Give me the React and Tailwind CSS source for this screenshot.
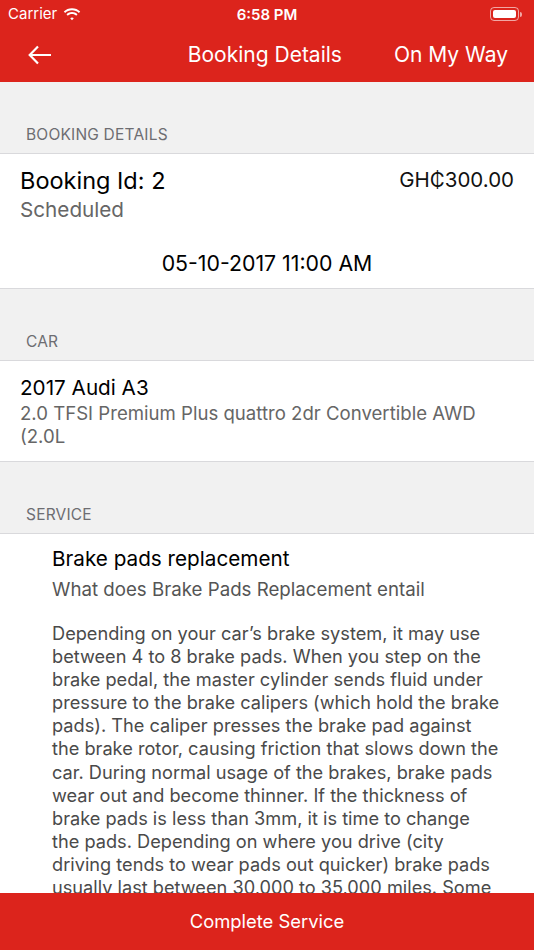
const font = { fontFamily: "Inter, 'Noto Sans', sans-serif" };

const paragraph = [
  "Depending on your car’s brake system, it may use",
  "between 4 to 8 brake pads. When you step on the",
  "brake pedal, the master cylinder sends fluid under",
  "pressure to the brake calipers (which hold the brake",
  "pads). The caliper presses the brake pad against",
  "the brake rotor, causing friction that slows down the",
  "car. During normal usage of the brakes, brake pads",
  "wear out and become thinner. If the thickness of",
  "brake pads is less than 3mm, it is time to change",
  "the pads. Depending on where you drive (city",
  "driving tends to wear pads out quicker) brake pads",
  "usually last between 30,000 to 35,000 miles. Some",
];

const Wifi = () => (
  <svg width="18" height="13" viewBox="0 0 18 13" fill="white">
    <path d="M9 2.2c2.7 0 5.1 1 6.9 2.7l1.3-1.4C15.1 1.4 12.2.2 9 .2S2.9 1.4.8 3.5l1.3 1.4C3.9 3.2 6.3 2.2 9 2.2z" />
    <path d="M9 6c1.6 0 3.1.6 4.2 1.7l1.3-1.4C13.1 4.9 11.1 4 9 4s-4.1.9-5.5 2.3l1.3 1.4C5.9 6.6 7.4 6 9 6z" />
    <path d="M9 9.6c.7 0 1.3.3 1.8.7L9 12.2l-1.8-1.9c.5-.4 1.1-.7 1.8-.7z" />
  </svg>
);

const SectionHeader = ({ title }) => (
  <div className="flex h-[72px] items-end border-b border-[#d9d9dc] bg-[#f1f1f1] px-[26px] pb-[7px]">
    <span className="text-[15.5px] uppercase tracking-[0.2px] text-[#6d6d72]">{title}</span>
  </div>
);

export default function App() {
  return (
    <div style={font} className="relative flex h-[950px] w-[534px] flex-col overflow-hidden bg-[#f1f1f1]">
      <div className="bg-[#dc241c] text-white">
        <div className="flex h-[28px] items-center justify-between px-[8px]">
          <div className="flex items-center gap-[6px] text-[15px]">
            <span>Carrier</span>
            <Wifi />
          </div>
          <span className="absolute left-1/2 top-[4px] -translate-x-1/2 text-[15px] font-semibold">6:58 PM</span>
          <div className="flex items-center gap-[1px] pr-[4px]">
            <div className="flex h-[14px] w-[29px] items-center rounded-[4px] border border-white/60 p-[2px]">
              <div className="h-full w-full rounded-[2px] bg-white" />
            </div>
            <div className="h-[5px] w-[2px] rounded-r-sm bg-white/60" />
          </div>
        </div>
        <div className="flex h-[54px] items-center justify-between pl-[28px] pr-[26px]">
          <svg width="24" height="20" viewBox="0 0 24 20" fill="none" stroke="white" strokeWidth="2.2">
            <path d="M23 10H2M10 1.5L1.7 10l8.3 8.5" />
          </svg>
          <div className="flex items-center gap-[52px] text-[21px]">
            <span>Booking Details</span>
            <span>On My Way</span>
          </div>
        </div>
      </div>

      <div className="flex-1 overflow-hidden">
        <SectionHeader title="Booking Details" />
        <div className="border-b border-[#d9d9dc] bg-white px-[20px] pb-[11px] pt-[12px]">
          <div className="flex items-start justify-between">
            <div>
              <div className="text-[23.5px] leading-[30px] text-black">Booking Id: 2</div>
              <div className="text-[20.7px] leading-[28px] text-[#666]">Scheduled</div>
            </div>
            <div className="text-[20.5px] leading-[28px] text-[#111]">GH₵300.00</div>
          </div>
          <div className="mt-[25px] text-center text-[21.3px] leading-[28px] text-black">05-10-2017 11:00 AM</div>
        </div>

        <SectionHeader title="Car" />
        <div className="border-b border-[#d9d9dc] bg-white px-[20px] pb-[13px] pt-[13px]">
          <div className="text-[20.7px] leading-[28px] text-black">2017 Audi A3</div>
          <div className="text-[18.6px] leading-[23px] text-[#666]">
            2.0 TFSI Premium Plus quattro 2dr Convertible AWD
            <br />
            (2.0L
          </div>
        </div>

        <SectionHeader title="Service" />
        <div className="bg-white pl-[52px] pr-[16px] pt-[11px]">
          <div className="text-[20.7px] leading-[28px] text-black">Brake pads replacement</div>
          <div className="mt-[5px] text-[18.7px] leading-[24px] text-[#555]">What does Brake Pads Replacement entail</div>
          <div className="mt-[20px] text-[18.2px] leading-[23.1px] text-[#4a4a4a]">
            {paragraph.map((line) => (
              <div key={line} className="whitespace-nowrap">{line}</div>
            ))}
          </div>
        </div>
      </div>

      <button className="absolute bottom-0 left-0 flex h-[57px] w-full items-center justify-center bg-[#dc241c] text-[18.4px] text-white">
        Complete Service
      </button>
    </div>
  );
}
